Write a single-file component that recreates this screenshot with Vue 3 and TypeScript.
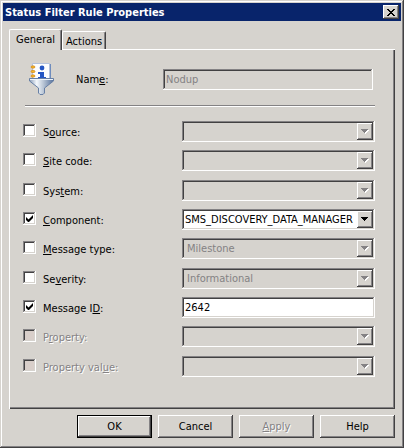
<script setup lang="ts">
import { reactive, ref } from 'vue'

interface FilterRow {
  id: string
  before: string
  key: string
  after: string
  value: string
  checked: boolean
  unavailable?: boolean
  text?: boolean
}

const ruleName = ref('Nodup')

const rows = reactive<FilterRow[]>([
  { id: 'source', before: 'S', key: 'o', after: 'urce:', value: '', checked: false },
  { id: 'site', before: '', key: 'S', after: 'ite code:', value: '', checked: false },
  { id: 'system', before: 'Sys', key: 't', after: 'em:', value: '', checked: false },
  { id: 'component', before: '', key: 'C', after: 'omponent:', value: 'SMS_DISCOVERY_DATA_MANAGER', checked: true },
  { id: 'type', before: '', key: 'M', after: 'essage type:', value: 'Milestone', checked: false },
  { id: 'severity', before: 'Se', key: 'v', after: 'erity:', value: 'Informational', checked: false },
  { id: 'message', before: 'Message I', key: 'D', after: ':', value: '2642', checked: true, text: true },
  { id: 'property', before: 'P', key: 'r', after: 'operty:', value: '', checked: false, unavailable: true },
  { id: 'value', before: 'Property val', key: 'u', after: 'e:', value: '', checked: false, unavailable: true },
])
</script>

<template>
  <main class="dialog">
    <header class="titlebar">
      <h1>Status Filter Rule Properties</h1>
      <button class="close" type="button" aria-label="Close">
        <svg width="8" height="7" viewBox="0 0 8 7" shape-rendering="crispEdges" aria-hidden="true">
          <path d="M0 0h2v1h1v1h2v-1h1v-1h2v1h-1v1h-1v1h-1v1h1v1h1v1h1v1h-2v-1h-1v-1h-2v1h-1v1h-2v-1h1v-1h1v-1h1v-1h-1v-1h-1v-1h-1z" />
        </svg>
      </button>
    </header>

    <form class="content" @submit.prevent>
      <div class="tabs" role="tablist">
        <button class="tab active" type="button" role="tab" aria-selected="true">General</button>
        <button class="tab" type="button" role="tab" aria-selected="false">Actions</button>
      </div>

      <section class="panel" role="tabpanel">
        <div class="name-row">
          <svg class="rule-icon" width="32" height="32" viewBox="0 0 32 32" aria-hidden="true">
            <defs>
              <linearGradient id="cone" x1="0" x2="1" y1="0" y2="0">
                <stop offset="0" stop-color="#8a9db8" />
                <stop offset="0.3" stop-color="#f4f8fc" />
                <stop offset="0.6" stop-color="#b4c1d2" />
                <stop offset="1" stop-color="#56719c" />
              </linearGradient>
            </defs>
            <path d="M9.500 0.500h17V17h-17z" fill="#fcfdff" stroke="#b4c3de" />
            <path d="M27.500 1v16" stroke="#6f8cbd" />
            <circle cx="19" cy="5" r="2.400" fill="#2456c4" />
            <path d="M15 9h6v5h2v2h-8v-2h2v-3h-2z" fill="#2456c4" />
            <g fill="#f5b727" stroke="#c97b12" stroke-width="0.600">
              <ellipse cx="10" cy="4" rx="2" ry="1.200" />
              <ellipse cx="10" cy="8.500" rx="2" ry="1.200" />
              <ellipse cx="10" cy="13" rx="2" ry="1.200" />
            </g>
            <path d="M6.500 15.500h24v2.500L21.500 25v5l-1.500 1.500h-3L15.500 30v-5L6.500 18z" fill="url(#cone)" stroke="#6880a5" />
            <path d="M7 16.500h23" stroke="#eef4fb" />
          </svg>
          <label for="rule-name">Nam<u>e</u>:</label>
          <input id="rule-name" v-model="ruleName" class="field" type="text" disabled />
        </div>
        <hr />

        <div class="rows">
          <div v-for="row in rows" :key="row.id" class="row" :class="{ unavailable: row.unavailable }">
            <input :id="row.id" v-model="row.checked" class="check" type="checkbox" :disabled="row.unavailable" />
            <label :for="row.id"><span>{{ row.before }}<u>{{ row.key }}</u>{{ row.after }}</span></label>
            <input
              v-if="row.text"
              v-model="row.value"
              class="field"
              type="text"
              :aria-label="row.before + row.key"
              :disabled="!row.checked"
            />
            <div v-else class="combo">
              <select v-model="row.value" class="field" :aria-label="row.before + row.key + row.after" :disabled="!row.checked">
                <option :value="row.value">{{ row.value }}</option>
              </select>
              <span class="arrow" :class="{ on: row.checked }">
                <svg width="8" height="5" viewBox="0 0 8 5" shape-rendering="crispEdges" aria-hidden="true">
                  <path v-if="!row.checked" class="etch" d="M1 1h7v1h-1v1h-1v1h-1v1h-1v-1h-1v-1h-1v-1h-1z" />
                  <path class="glyph" d="M0 0h7v1h-1v1h-1v1h-1v1h-1v-1h-1v-1h-1v-1h-1z" />
                </svg>
              </span>
            </div>
          </div>
        </div>
      </section>

      <footer class="actions">
        <button class="push default" type="submit">OK</button>
        <button class="push" type="button">Cancel</button>
        <button class="push" type="button" disabled><span><u>A</u>pply</span></button>
        <button class="push" type="button">Help</button>
      </footer>
    </form>
  </main>
</template>

<style>
body {
  background: #d6d3ce;
}
</style>

<style scoped>
.dialog {
  --face: #d6d3ce;
  --shade: #848284;
  --dark: #424142;
  --raised: inset -1px -1px var(--dark), inset 1px 1px #fff, inset -2px -2px var(--shade);
  --sunken: inset -1px -1px #fff, inset 1px 1px var(--shade), inset -2px -2px var(--face), inset 2px 2px var(--dark);
  box-sizing: border-box;
  padding: 3px;
  background: var(--face);
  color: #000;
  font: 11px/13px "DejaVu Sans Condensed", "DejaVu Sans", sans-serif;
  box-shadow: inset -1px -1px var(--dark), inset 1px 1px var(--face), inset -2px -2px var(--shade), inset 2px 2px #fff;
}

.dialog * {
  box-sizing: border-box;
}

button,
input,
select {
  appearance: none;
  margin: 0;
  padding: 0;
  border: 0;
  border-radius: 0;
  color: inherit;
  background: var(--face);
  font: inherit;
}

u {
  text-underline-offset: 1px;
  text-decoration-thickness: 1px;
}

.titlebar {
  display: flex;
  align-items: center;
  justify-content: space-between;
  height: 18px;
  padding: 0 2px;
  background: #08246b;
}

h1 {
  margin: 0;
  color: #fff;
  font-size: 11px;
  font-weight: bold;
}

.close {
  display: grid;
  place-items: center;
  width: 16px;
  height: 14px;
  box-shadow: var(--raised);
}

.content {
  padding: 8px 6px 7px;
}

.tabs {
  display: flex;
  align-items: flex-end;
}

.tab {
  height: 18px;
  padding: 1px 3px 0;
  border: 1px solid #fff;
  border-right-color: var(--dark);
  border-bottom: 0;
  border-radius: 2px 2px 0 0;
  box-shadow: inset -1px 0 var(--shade);
}

.tab.active {
  position: relative;
  height: 21px;
  margin-bottom: -1px;
  padding: 0 6px 2px;
}

.panel {
  padding: 13px 20px 32px 13px;
  border-top: 1px solid #fff;
  border-left: 1px solid #fff;
  box-shadow: inset -1px -1px var(--dark), inset -2px -2px var(--shade);
}

.name-row {
  display: grid;
  grid-template-columns: 53px 87px 1fr;
  align-items: center;
  padding-right: 2px;
}

.field {
  width: 100%;
  height: 21px;
  padding: 0 3px;
  background: #fff;
  box-shadow: var(--sunken);
}

.field:disabled {
  padding-left: 5px;
  background: var(--face);
  color: var(--shade);
  opacity: 1;
}

input.field:disabled {
  padding-left: 3px;
}

hr {
  height: 2px;
  margin: 10px 0 14px 2px;
  border: 0;
  border-top: 1px solid var(--shade);
  border-bottom: 1px solid #fff;
}

.row {
  display: grid;
  grid-template-columns: 20px 139px 1fr;
  align-items: start;
  height: 29px;
}

.row:nth-child(3n + 2) {
  height: 30px;
}

.row:last-child {
  height: 21px;
}

.row label {
  padding-top: 5px;
}

.check {
  display: grid;
  width: 13px;
  height: 13px;
  margin-top: 3px;
  background: #fff;
  box-shadow: var(--sunken);
}

.check:checked::before {
  content: "";
  width: 7px;
  height: 7px;
  margin: 3px;
  background: #000;
  clip-path: polygon(0 29%, 0 72%, 29% 100%, 43% 100%, 100% 43%, 100% 0, 36% 64%);
}

.check:disabled {
  background: #d9cfca;
}

.unavailable label {
  color: var(--shade);
  text-shadow: 1px 1px #fff;
}

.combo {
  position: relative;
}

.combo .field {
  display: block;
}

.arrow {
  position: absolute;
  top: 2px;
  right: 2px;
  display: grid;
  place-items: center;
  width: 16px;
  height: 17px;
  background: var(--face);
  box-shadow: var(--raised);
  pointer-events: none;
}

.arrow svg {
  display: block;
}

.glyph {
  fill: var(--shade);
}

.on .glyph {
  fill: #000;
}

.etch {
  fill: #fff;
}

.actions {
  display: flex;
  justify-content: flex-end;
  gap: 6px;
  padding-top: 6px;
}

.push {
  width: 75px;
  height: 23px;
  box-shadow: var(--raised);
}

.push.default {
  border: 1px solid #000;
}

.push:disabled {
  color: var(--shade);
  text-shadow: 1px 1px #fff;
}
</style>
